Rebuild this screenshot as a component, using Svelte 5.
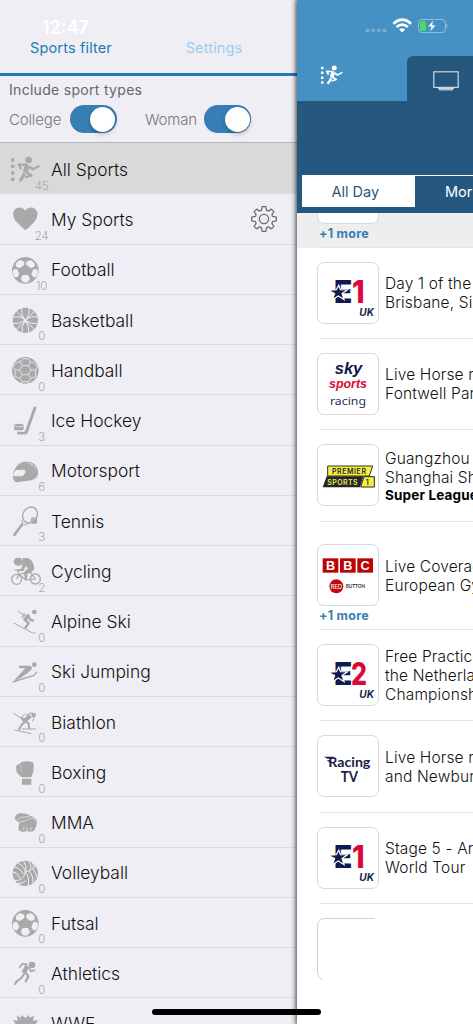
<script lang="ts">
	type Sport = { name: string; count: number; icon: string };
	type Event = { logo: string; lines: string[]; league?: string; more?: boolean };

	let active = $state('All Sports');
	let college = $state(true);
	let woman = $state(true);

	const sports: Sport[] = [
		{ name: 'All Sports', count: 45, icon: 'all' },
		{ name: 'My Sports', count: 24, icon: 'heart' },
		{ name: 'Football', count: 10, icon: 'football' },
		{ name: 'Basketball', count: 0, icon: 'basketball' },
		{ name: 'Handball', count: 0, icon: 'handball' },
		{ name: 'Ice Hockey', count: 3, icon: 'hockey' },
		{ name: 'Motorsport', count: 6, icon: 'helmet' },
		{ name: 'Tennis', count: 3, icon: 'tennis' },
		{ name: 'Cycling', count: 2, icon: 'cycling' },
		{ name: 'Alpine Ski', count: 0, icon: 'alpine' },
		{ name: 'Ski Jumping', count: 0, icon: 'jump' },
		{ name: 'Biathlon', count: 0, icon: 'biathlon' },
		{ name: 'Boxing', count: 0, icon: 'boxing' },
		{ name: 'MMA', count: 0, icon: 'mma' },
		{ name: 'Volleyball', count: 0, icon: 'volleyball' },
		{ name: 'Futsal', count: 0, icon: 'football' },
		{ name: 'Athletics', count: 0, icon: 'athletics' },
		{ name: 'WWE', count: 0, icon: 'wwe' }
	];

	const events: Event[] = [
		{ logo: 'e1', lines: ['Day 1 of the', 'Brisbane, Six Day'] },
		{ logo: 'sky', lines: ['Live Horse racing', 'Fontwell Park'] },
		{ logo: 'premier', lines: ['Guangzhou', 'Shanghai Shenhua'], league: 'Super League' },
		{ logo: 'bbc', lines: ['Live Coverage', 'European Gymnastics'], more: true },
		{ logo: 'e2', lines: ['Free Practice', 'the Netherlands', 'Championship'] },
		{ logo: 'racing', lines: ['Live Horse racing', 'and Newbury'] },
		{ logo: 'e1', lines: ['Stage 5 - Arctic', 'World Tour'] }
	];
</script>

{#snippet runner()}
	<g fill="currentColor">
		<rect x="33" y="43" width="10" height="10" rx="2" />
		<rect x="33" y="62" width="10" height="10" rx="2" />
		<rect x="33" y="82" width="10" height="10" rx="2" />
		<rect x="33" y="101" width="10" height="10" rx="2" />
		<circle cx="86" cy="48" r="10" />
	</g>
	<g fill="none" stroke="currentColor" stroke-linejoin="round">
		<path d="M84 63 56 61 63 75" stroke-width="7" />
		<path d="m83 65-8 19" stroke-width="15" />
		<path d="m86 67 13 9 19-10" stroke-width="7" />
		<path d="m77 83 17 11-19 6" stroke-width="7" />
		<path d="m74 87-7 14-8 10" stroke-width="9" />
	</g>
{/snippet}

{#snippet sportIcon(icon: string)}
	{#if icon === 'all'}
		{@render runner()}
	{:else if icon === 'heart'}
		<path
			fill="currentColor"
			d="M76 109Q65 99 50 84C36 69 37 52 47 44 58 36 70 42 76 50 83 41 95 37 105 45 116 54 115 69 103 83Q89 99 76 109Z"
		/>
	{:else if icon === 'football'}
		<circle cx="76" cy="76" r="40" fill="currentColor" />
		<g fill="#efeef4">
			<path d="m61 45 12 5v10L60 69l-11-3-2-9q5-9 14-12Z" />
			<path d="m91 45-12 5v10l13 9 11-3 2-9q-5-9-14-12Z" />
			<path d="m43 72 9 1 6 14-6 10-9-1q-6-11-5-18Z" />
			<path d="m109 72-9 1-6 14 6 10 9-1q6-11 5-18Z" />
			<path d="m68 90 16 0 6 11-6 10q-8 3-16 0l-6-10Z" />
		</g>
	{:else if icon === 'basketball'}
		<circle cx="76" cy="76" r="38" fill="currentColor" />
		<g fill="none" stroke="#efeef4" stroke-width="3">
			<path
				d="M48 47 104 105M104 48 48 105M65 38Q61 57 75 75 89 96 86 114M86 38Q91 57 77 75 63 95 66 114M39 67Q57 61 76 75 94 90 113 84M39 85Q57 89 76 75 94 61 113 66"
			/>
		</g>
	{:else if icon === 'handball'}
		<circle cx="76" cy="76" r="40" fill="currentColor" />
		<path
			fill="none"
			stroke="#efeef4"
			stroke-width="2.5"
			d="m67 62 18 0 8 13-8 14H67l-8-14ZM67 62l-6-12 8-9h14l8 9-6 12M61 50l-12 3M91 50l12 3M59 75H46l-7-9 10-13M93 75h13l7-9-10-13M67 89l-8 11-14-5 1-20M85 89l8 11 14-5-1-20M59 100l8 10h18l8-10M67 110l-2 5M85 110l2 5"
		/>
	{:else if icon === 'hockey'}
		<path
			d="M106 35 80 109Q78 114 71 114H52"
			fill="none"
			stroke="currentColor"
			stroke-width="9"
		/>
		<path d="M42 89Q57 84 71 89V104Q57 109 42 104Z" fill="currentColor" />
		<path d="M42 93Q57 100 71 93M50 109H72" fill="none" stroke="#efeef4" stroke-width="2" />
	{:else if icon === 'helmet'}
		<path
			fill="currentColor"
			d="M39 81 47 66C53 51 68 46 84 47 105 50 116 63 114 85 113 96 107 101 96 103L50 109Q40 108 39 93Z"
		/>
		<path fill="#efeef4" d="m41 82 7-10 22-1q8 1 6 8-4 9-10 12-12 0-27-1Z" />
		<path fill="none" stroke="#efeef4" stroke-width="2" d="M83 51q20 4 25 19M95 103q14-3 19-16" />
	{:else if icon === 'tennis'}
		<ellipse
			cx="90"
			cy="57"
			rx="21"
			ry="25"
			transform="rotate(34 90 57)"
			fill="none"
			stroke="currentColor"
			stroke-width="4"
		/>
		<path d="m66 71 2 15q11 3 17-3M68 85 61 91" fill="none" stroke="currentColor" stroke-width="3" />
		<path d="m65 87-22 30" stroke="currentColor" stroke-width="8" stroke-linecap="round" />
		<circle cx="102" cy="74" r="10" fill="currentColor" />
		<path d="m94 76 12-10" stroke="#efeef4" stroke-width="1.5" />
	{:else if icon === 'cycling'}
		<g fill="none" stroke="currentColor" stroke-width="4">
			<circle cx="50" cy="100" r="15" />
			<circle cx="106" cy="99" r="15" />
			<path d="M43 72h9l5 13-7 15M57 85l22 17 27-3-14-19-33 4" stroke-width="3.5" />
		</g>
		<ellipse cx="55" cy="47" rx="14" ry="12" fill="currentColor" />
		<path
			fill="currentColor"
			d="M69 36H83Q101 40 103 70L97 76 80 84 83 88 80 103H73L74 90 69 81 84 67 77 60 70 76 53 75V70L64 68 67 56Z"
		/>
	{:else if icon === 'alpine'}
		<g fill="none" stroke="currentColor">
			<path d="M54 46 101 74M41 81 98 111Q103 113 107 110" stroke-width="3" />
			<path d="M84 58 73 71 86 81 75 97M84 56l6 15 12 4" stroke-width="7" stroke-linejoin="round" />
			<path d="m74 52-8 14" stroke-width="4" />
			<path d="m86 57-10 13" stroke-width="11" />
		</g>
		<circle cx="103" cy="48" r="7" fill="currentColor" />
	{:else if icon === 'jump'}
		<circle cx="103" cy="53" r="7" fill="currentColor" />
		<path
			fill="currentColor"
			d="M57 56H88l9 5q-2 8-11 15L62 93 40 106q8-14 20-25l15-17-18-1Z"
		/>
		<path
			d="M38 105 102 85 111 75"
			fill="none"
			stroke="currentColor"
			stroke-width="4"
		/>
	{:else if icon === 'biathlon'}
		<circle cx="101" cy="54" r="7" fill="currentColor" />
		<g fill="none" stroke="currentColor">
			<path d="M40 49 63 63 75 50M77 54l20-7M43 99 94 110M66 96h42M102 59l-4 15" stroke-width="3" />
			<path d="M87 58 74 69 63 63M74 70l12 10 1 16M75 74 65 83 56 100" stroke-width="6" />
			<path d="M91 56 70 75" stroke-width="12" />
		</g>
	{:else if icon === 'boxing'}
		<path
			fill="currentColor"
			d="M60 49Q65 43 80 43q18 0 21 7 2 23-7 41H65L51 77Q45 58 52 53 56 50 60 51ZM66 95h28v18H66Z"
		/>
		<path d="M61 54q3 7 2 15 1 5 5 7" fill="none" stroke="#efeef4" stroke-width="1.3" />
	{:else if icon === 'mma'}
		<path
			fill="currentColor"
			d="M44 64q5-16 20-15l17 2 9 5q18 5 21 17 0 16-10 29l-11 3-10-3-12 3-12-5Q53 88 59 75 48 75 44 64Z"
		/>
		<path
			fill="none"
			stroke="#efeef4"
			stroke-width="2"
			d="M49 72Q57 60 72 60t18-4M60 75q17-1 26-9 16-7 24 8M70 99l2-10M80 102l2-11M91 103l3-12"
		/>
	{:else if icon === 'volleyball'}
		<circle cx="76" cy="76" r="38" fill="currentColor" />
		<path
			fill="none"
			stroke="#efeef4"
			stroke-width="3"
			d="M76 73Q82 51 69 38M76 73Q97 64 108 54M76 73Q68 101 45 97M54 45Q75 56 76 73M43 57Q62 60 68 77M38 72Q53 74 59 91M83 38Q98 50 90 64M96 43Q104 51 101 60M76 73Q90 86 84 114M87 69Q101 84 99 106M98 62Q110 76 111 90M54 106Q68 108 77 98"
		/>
	{:else if icon === 'athletics'}
		<circle cx="96" cy="51" r="10" fill="currentColor" />
		<g fill="none" stroke="currentColor" stroke-linejoin="round">
			<path d="M58 59 67 47 82 50M87 58l6 12 13-4" stroke-width="5" />
			<path d="m76 73 9 12-9 17" stroke-width="7" />
			<path d="m73 77-9 13-15 11-5 9" stroke-width="6" />
			<path d="m82 54-11 21" stroke-width="14" />
		</g>
	{:else}
		<path
			fill="currentColor"
			d="m38 66 15 2-3-15 12 6 3-8 11 9 10-9 3 8 13-6-3 15 15-1-10 15 6 16H42l8-16Z"
		/>
	{/if}
{/snippet}

{#snippet logo(name: string)}
	<svg class="logo" viewBox="0 0 186 186" aria-hidden="true">
		{#if name === 'e1' || name === 'e2'}
			<text
				x="50"
				y="122"
				font-size="94"
				textLength="56"
				lengthAdjust="spacingAndGlyphs"
				font-family="Inter"
				font-weight="800"
				fill="#14194d">E</text
			>
			<path
				d="m65 74 4 11h17L73 94l5 15-14-9-14 9 5-15-15-8 19-1Z"
				fill="#14194d"
				stroke="#fff"
				stroke-width="7"
			/>
			<path d="m65 74 4 11h17L73 94l5 15-14-9-14 9 5-15-15-8 19-1Z" fill="#14194d" />
			<text
				x={name === 'e1' ? 105 : 102}
				y="122"
				font-size="94"
				textLength={name === 'e1' ? 38 : 48}
				lengthAdjust="spacingAndGlyphs"
				font-family="Inter"
				font-weight="800"
				fill="#dc0838">{name === 'e1' ? '1' : '2'}</text
			>
			<text
				x="127"
				y="162"
				font-size="29"
				textLength="44"
				lengthAdjust="spacingAndGlyphs"
				font-family="Inter"
				font-weight="700"
				font-style="italic"
				fill="#20264f">UK</text
			>
		{:else if name === 'sky'}
			<g font-family="Liberation Sans" font-weight="700" font-style="italic">
				<text
					x="53"
					y="63"
					font-size="48"
					textLength="83"
					lengthAdjust="spacingAndGlyphs"
					fill="#101748">sky</text
				>
				<text
					x="36"
					y="105"
					font-size="37"
					textLength="114"
					lengthAdjust="spacingAndGlyphs"
					fill="#df0735">sports</text
				>
			</g>
			<text
				x="39"
				y="157"
				font-size="34"
				textLength="108"
				lengthAdjust="spacingAndGlyphs"
				font-family="Noto Sans"
				fill="#2a315e">racing</text
			>
		{:else if name === 'premier'}
			<path d="M32 66H167L157 96H32Z" fill="#f4ef3d" stroke="#333" stroke-width="3" />
			<path d="M29 97H139L129 130H17Z" fill="#252627" />
			<path d="M141 98H172V129H131Z" fill="#f4ef3d" stroke="#252627" stroke-width="3" />
			<g font-family="Inter" font-weight="600" font-size="21">
				<text x="45" y="89" textLength="102" fill="#252627">PREMIER</text>
				<text x="31" y="122" textLength="91" fill="#eeeb4a">SPORTS</text>
				<text x="146" y="122" fill="#252627">1</text>
			</g>
		{:else if name === 'bbc'}
			{#each ['B', 'B', 'C'] as letter, i}
				<rect x={17 + i * 52} y="43" width="47" height="43" fill="#bb0505" />
				<text
					x={40.5 + i * 52}
					y="78"
					text-anchor="middle"
					font-size="38"
					font-family="Liberation Sans"
					font-weight="700"
					fill="#fff">{letter}</text
				>
			{/each}
			<circle cx="58" cy="127" r="21" fill="#c0080b" />
			<text
				x="58"
				y="134"
				text-anchor="middle"
				font-size="19"
				textLength="35"
				font-family="Noto Sans"
				fill="#fff">RED</text
			>
			<text
				x="86"
				y="132"
				font-size="15"
				textLength="58"
				lengthAdjust="spacingAndGlyphs"
				font-family="Lato"
				font-weight="700"
				fill="#333">BUTTON</text
			>
		{:else}
			<path d="M21 65H50V71H31ZM29 76H42V82H37Z" fill="#191c48" />
			<g font-family="Lato" font-weight="700" fill="#191c48">
				<text x="34" y="95" font-size="42" textLength="126" lengthAdjust="spacingAndGlyphs"
					>Racing</text
				>
				<text x="71" y="141" font-size="43" textLength="52" lengthAdjust="spacingAndGlyphs">TV</text>
			</g>
		{/if}
	</svg>
{/snippet}

<div class="screen">
	<aside class="filter">
		<nav class="filter-tabs">
			<button class="tab current">Sports filter</button>
			<button class="tab">Settings</button>
		</nav>

		<section class="include">
			<h2>Include sport types</h2>
			<div class="switches">
				<span>College</span>
				<button
					class="switch"
					class:on={college}
					aria-label="College"
					onclick={() => (college = !college)}
				></button>
				<span class="second">Woman</span>
				<button
					class="switch"
					class:on={woman}
					aria-label="Woman"
					onclick={() => (woman = !woman)}
				></button>
			</div>
		</section>

		<ul class="sports">
			{#each sports as sport}
				<li class:active={active === sport.name}>
					<button class="sport" onclick={() => (active = sport.name)}>
						<span class="icon">
							<svg viewBox="30 0 100 150" aria-hidden="true">{@render sportIcon(sport.icon)}</svg>
							<small>{sport.count}</small>
						</span>
						<span class="name">{sport.name}</span>
						{#if sport.icon === 'heart'}
							<svg class="gear" viewBox="0 0 28 28" aria-hidden="true">
								<path
									d="M11.4 5.4 12.2 1.7H15.8L16.6 5.4 18.4 6.1 21.4 4.1 23.9 6.6 21.9 9.6 22.6 11.4 26.3 12.2V15.8L22.6 16.6 21.9 18.4 23.9 21.4 21.4 23.9 18.4 21.9 16.6 22.6 15.8 26.3H12.2L11.4 22.6 9.6 21.9 6.6 23.9 4.1 21.4 6.1 18.4 5.4 16.6 1.7 15.8V12.2L5.4 11.4 6.1 9.6 4.1 6.6 6.6 4.1 9.6 6.1Z"
								/>
								<circle cx="14" cy="14" r="4.6" />
							</svg>
						{/if}
					</button>
				</li>
			{/each}
		</ul>
	</aside>

	<main class="guide">
		<header>
			<div class="top-tabs">
				<div class="top-tab">
					<svg class="runner" viewBox="30 36 94 80" aria-hidden="true">{@render runner()}</svg>
				</div>
				<div class="top-tab tv">
					<svg viewBox="0 0 26 20" aria-hidden="true">
						<rect x=".8" y=".8" width="24.4" height="15.6" />
						<path d="M5 17.5H21" />
						<path d="M6 18.8H20" />
					</svg>
				</div>
			</div>
			<div class="periods">
				<span class="period selected">All Day</span>
				<span class="period">Morning</span>
			</div>
		</header>

		<div class="event past">
			<div class="channel">
				<div class="card"></div>
				<span class="more">+1 more</span>
			</div>
		</div>

		{#each events as event}
			<article class="event" class:tall={event.more}>
				<div class="channel">
					<div class="card">{@render logo(event.logo)}</div>
					{#if event.more}<span class="more">+1 more</span>{/if}
				</div>
				<div class="title">
					{#each event.lines as line}
						<p>{line}</p>
					{/each}
					{#if event.league}<strong>{event.league}</strong>{/if}
				</div>
			</article>
		{/each}

		<article class="event loading">
			<svg viewBox="0 0 62 63" aria-hidden="true">
				<path d="M57.5 .5H8Q.5 .5 .5 8V54Q.5 59 5 62" />
			</svg>
		</article>
	</main>

	<div class="clock">12:47</div>
	<svg class="status" viewBox="0 0 84 16" aria-hidden="true">
		<g fill="#76add5">
			<circle cx="3.5" cy="12.5" r="2" />
			<circle cx="9.2" cy="12.5" r="2" />
			<circle cx="14.8" cy="12.5" r="2" />
			<circle cx="20.5" cy="12.5" r="2" />
		</g>
		<g fill="none" stroke="#fff" stroke-width="2.6">
			<path d="M29.3 5.7Q38.2-2.3 47.1 5.7" />
			<path d="M32.5 9.1Q38.2 4.2 43.9 9.1" />
		</g>
		<path d="m35.2 11.5q3-2.5 6 0l-3 3Z" fill="#fff" />
		<rect x="54.5" y="1.5" width="27" height="13" rx="3.5" fill="none" stroke="#8fbfdc" />
		<path d="M82.3 5.5q2.4 2 0 4.5Z" fill="#8fbfdc" />
		<rect x="56" y="3" width="6" height="10" rx="1.5" fill="#4cd964" />
		<path
			d="M69.7 1.5 63.5 8.8H67L65.5 14.5 72.3 7H68.6Z"
			fill="#fff"
			stroke="#4691c3"
			stroke-width=".8"
		/>
	</svg>
	<div class="home"></div>
</div>

<style>
	:global(body) {
		margin: 0;
		overflow: hidden;
	}

	.screen {
		position: relative;
		display: flex;
		width: 473px;
		height: 1024px;
		overflow: hidden;
		font-family: Inter, 'Liberation Sans', sans-serif;
		background: #fff;
	}

	button {
		border: 0;
		padding: 0;
		background: none;
		font: inherit;
		color: inherit;
	}

	.filter {
		flex: 0 0 297px;
		height: 1024px;
		overflow: hidden;
		background: #efeef4;
	}

	.filter-tabs {
		display: grid;
		grid-template-columns: 142px 144px;
		height: 76px;
		padding-top: 22px;
		box-sizing: border-box;
		border-bottom: 3px solid #247bb4;
		font-size: 14.5px;
	}

	.filter-tabs .tab {
		letter-spacing: 0.15px;
		color: #9ccdf0;
	}

	.filter-tabs .current {
		color: #247bb4;
	}

	.include {
		height: 67px;
		box-sizing: border-box;
		padding: 5px 9px 0;
		border-bottom: 1px solid #b5b5b8;
		color: #77777a;
	}

	.include h2 {
		margin: 0;
		font-size: 14px;
		font-weight: 400;
		line-height: 17px;
		letter-spacing: 0.3px;
		color: #666669;
	}

	.switches {
		display: flex;
		align-items: center;
		height: 30px;
		margin-top: 6px;
		font-size: 15px;
		font-weight: 300;
		letter-spacing: -0.15px;
	}

	.switches span {
		width: 60.5px;
	}

	.switches .second {
		width: 59px;
		margin-left: 28.5px;
	}

	.switch {
		display: flex;
		justify-content: flex-start;
		width: 47px;
		height: 28px;
		padding: 1.5px;
		border-radius: 14px;
		background: #ccc;
	}

	.switch.on {
		justify-content: flex-end;
		background: #377eb4;
	}

	.switch::after {
		content: '';
		width: 25px;
		height: 25px;
		border-radius: 50%;
		background: #fff;
		box-shadow: 0 2px 4px rgb(0 0 0 / 25%);
	}

	.sports {
		margin: 0;
		padding: 0;
		list-style: none;
	}

	.sports li {
		height: 50.25px;
		box-sizing: border-box;
		border-bottom: 1px solid #dcdbe1;
	}

	.sports li:first-child {
		height: 51.25px;
		padding-top: 1px;
	}

	.sports li.active {
		background: #d9d9d9;
	}

	.sport {
		display: flex;
		align-items: center;
		width: 100%;
		height: 50.25px;
		text-align: left;
	}

	.icon {
		display: grid;
		flex: 0 0 51px;
		grid-template-columns: 34px;
		grid-template-rows: 50px;
		height: 50px;
		padding-left: 10px;
		box-sizing: border-box;
		color: #a9a9aa;
	}

	.icon svg,
	.icon small {
		grid-area: 1 / 1;
	}

	.icon svg {
		width: 33.33px;
		height: 50px;
	}

	.icon small {
		align-self: end;
		width: 20px;
		margin-left: 21.5px;
		margin-bottom: 0.5px;
		font-size: 11.5px;
		font-weight: 300;
		line-height: 15px;
		text-align: center;
		letter-spacing: -0.4px;
		color: #a9a9ad;
	}

	.name {
		flex: 1;
		padding-top: 0.5px;
		font-size: 17.4px;
		font-weight: 300;
		color: #111;
	}

	.gear {
		width: 28px;
		height: 28px;
		margin-right: 19px;
		fill: none;
		stroke: #6f6f73;
		stroke-width: 1.3;
		stroke-linejoin: round;
	}

	.guide {
		flex: 0 0 176px;
		height: 1024px;
		background: #fff;
		box-shadow: 0 0 5px 1px rgb(0 0 0 / 75%);
		clip-path: inset(0 0 0 -10px);
	}

	header {
		height: 213px;
		background: #26587f;
	}

	.top-tabs {
		display: flex;
		align-items: flex-end;
		height: 101px;
		background: #4691c3;
	}

	.top-tab {
		flex: 0 0 110px;
		height: 45px;
		color: #fff;
	}

	.runner {
		width: 24px;
		height: 20px;
		margin: 9px 0 0 23px;
	}

	.tv {
		border-top-left-radius: 6px;
		background: #26587f;
	}

	.tv svg {
		width: 26px;
		height: 20px;
		margin: 15px 0 0 26px;
		fill: none;
		stroke: #cbd6df;
		stroke-width: 1.2;
	}

	.periods {
		display: flex;
		height: 32px;
		margin: 74px 0 0 4.5px;
		font-size: 14.5px;
		color: #fff;
	}

	.period {
		flex: 1 0 113px;
		box-sizing: border-box;
		padding-left: 30px;
		border-top: 1px solid #fff;
		line-height: 31px;
		white-space: nowrap;
	}

	.period.selected {
		flex: 0 0 113.5px;
		background: #fff;
		color: #26587f;
	}

	.event {
		display: flex;
		gap: 6px;
		height: 91.35px;
		box-sizing: border-box;
		padding: 14px 0 0 20px;
		background: linear-gradient(#e4e4e5, #e4e4e5) 23px 100% / 200px 1px no-repeat;
		overflow: hidden;
	}

	.event.tall {
		height: 108.5px;
		padding-top: 22.5px;
	}

	.event.past {
		height: 34.5px;
		padding-top: 0;
		background-color: #eee;
	}

	.past .card {
		height: 10.5px;
		border-top: 0;
		border-radius: 0 0 7px 7px;
	}

	.channel {
		flex: 0 0 62px;
	}

	.card {
		width: 62px;
		height: 62px;
		box-sizing: border-box;
		border: 1px solid #d8d8db;
		border-radius: 7px;
		background: #fff;
	}

	.logo {
		display: block;
		width: 62px;
		height: 62px;
		margin: -1px;
	}

	.more {
		display: block;
		padding: 2px 0 0 2px;
		font-size: 12.5px;
		font-weight: 700;
		line-height: 16px;
		letter-spacing: 0.25px;
		color: #377eb4;
	}

	.title {
		display: flex;
		flex-direction: column;
		justify-content: center;
		height: 63px;
		font-size: 15.5px;
		font-weight: 300;
		line-height: 19px;
		letter-spacing: 0.15px;
		white-space: nowrap;
		color: #111;
	}

	.title p {
		margin: 0;
	}

	.title strong {
		font-size: 13.5px;
		font-weight: 700;
		line-height: 16px;
		color: #000;
	}

	.loading {
		background: none;
	}

	.loading svg {
		width: 62px;
		height: 63px;
		fill: none;
		stroke: #d0d0d3;
	}

	.clock {
		position: absolute;
		top: 16.5px;
		left: 42px;
		font-size: 18px;
		font-weight: 600;
		line-height: 21px;
		color: #fff;
	}

	.status {
		position: absolute;
		top: 18px;
		left: 364px;
		width: 84px;
		height: 16px;
	}

	.home {
		position: absolute;
		bottom: 9.5px;
		left: 152px;
		width: 169px;
		height: 5.5px;
		border-radius: 3px;
		background: #000;
	}
</style>
